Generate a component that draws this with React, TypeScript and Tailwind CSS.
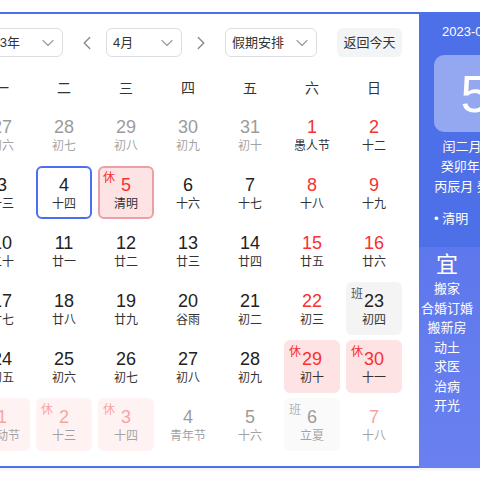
import { ChevronDown, ChevronLeft, ChevronRight } from 'lucide-react';

type Day = {
  d: number;
  l: string;
  out?: boolean;
  red?: boolean;
  tag?: '休' | '班';
  today?: boolean;
  active?: boolean;
};

const weekdays = ['一', '二', '三', '四', '五', '六', '日'];

const weeks: Day[][] = [
  [
    { d: 27, l: '初六', out: true },
    { d: 28, l: '初七', out: true },
    { d: 29, l: '初八', out: true },
    { d: 30, l: '初九', out: true },
    { d: 31, l: '初十', out: true },
    { d: 1, l: '愚人节', red: true },
    { d: 2, l: '十二', red: true },
  ],
  [
    { d: 3, l: '十三' },
    { d: 4, l: '十四', today: true },
    { d: 5, l: '清明', red: true, tag: '休', active: true },
    { d: 6, l: '十六' },
    { d: 7, l: '十七' },
    { d: 8, l: '十八', red: true },
    { d: 9, l: '十九', red: true },
  ],
  [
    { d: 10, l: '二十' },
    { d: 11, l: '廿一' },
    { d: 12, l: '廿二' },
    { d: 13, l: '廿三' },
    { d: 14, l: '廿四' },
    { d: 15, l: '廿五', red: true },
    { d: 16, l: '廿六', red: true },
  ],
  [
    { d: 17, l: '廿七' },
    { d: 18, l: '廿八' },
    { d: 19, l: '廿九' },
    { d: 20, l: '谷雨' },
    { d: 21, l: '初二' },
    { d: 22, l: '初三', red: true },
    { d: 23, l: '初四', tag: '班' },
  ],
  [
    { d: 24, l: '初五' },
    { d: 25, l: '初六' },
    { d: 26, l: '初七' },
    { d: 27, l: '初八' },
    { d: 28, l: '初九' },
    { d: 29, l: '初十', red: true, tag: '休' },
    { d: 30, l: '十一', red: true, tag: '休' },
  ],
  [
    { d: 1, l: '劳动节', out: true, red: true, tag: '休' },
    { d: 2, l: '十三', out: true, red: true, tag: '休' },
    { d: 3, l: '十四', out: true, red: true, tag: '休' },
    { d: 4, l: '青年节', out: true },
    { d: 5, l: '十六', out: true },
    { d: 6, l: '立夏', out: true, tag: '班' },
    { d: 7, l: '十八', out: true, red: true },
  ],
];

const good = ['搬家', '合婚订婚', '搬新房', '动土', '求医', '治病', '开光'];
const bad = ['安葬', '行丧', '伐木', '作梁'];

const Cell = ({ day }: { day: Day }) => {
  let box = 'border-transparent';
  if (day.today) box = 'border-[#4e6ef2] bg-white';
  else if (day.active) box = 'border-[#eca0a5] bg-[#fde3e4]';
  else if (day.tag === '休') box = 'border-transparent bg-[#fde3e4]';
  else if (day.tag === '班') box = 'border-transparent bg-[#f4f4f5]';

  return (
    <div
      className={`relative flex h-[53px] flex-col items-center rounded-[6px] border-2 pt-[6px] ${box} ${
        day.out ? 'opacity-[0.45]' : ''
      }`}
    >
      {day.tag && (
        <span
          className={`absolute left-[3px] top-[3px] text-[12px] leading-[14px] ${
            day.tag === '休' ? 'text-[#f73131]' : 'text-[#555]'
          }`}
        >
          {day.tag}
        </span>
      )}
      <span className={`text-[18px] leading-[22px] ${day.red ? 'text-[#f73131]' : 'text-[#222]'}`}>{day.d}</span>
      <span className="whitespace-nowrap text-[12px] leading-[16px] text-[#333]">{day.l}</span>
    </div>
  );
};

const Select = ({ label, className }: { label: string; className: string }) => (
  <div
    className={`flex h-full items-center justify-between rounded-[6px] border border-[#dcdee3] bg-white pr-[4px] ${className}`}
  >
    <span className="whitespace-nowrap">{label}</span>
    <ChevronDown size={20} strokeWidth={1.3} className="text-[#999]" />
  </div>
);

export default function App() {
  return (
    <div className="h-[480px] w-[480px] overflow-hidden bg-white font-['Liberation_Sans','Noto_Sans_CJK_SC',sans-serif]">
      <div className="ml-[-43px] mt-[12px] flex w-max shadow-[0_2px_3px_rgba(0,0,0,0.06)]">
        {/* month grid */}
        <div className="w-[462px] border-y-2 border-l-2 border-[#4e6ef2] bg-white pb-[15px] pl-[15px] pr-[17px] pt-[14px]">
          <div className="flex h-[29px] items-center text-[13px] text-[#333]">
            <Select label="2023年" className="ml-[-8px] w-[97px] pl-[11px]" />
            <ChevronLeft size={22} strokeWidth={1.4} className="ml-[13px] text-[#888]" />
            <Select label="4月" className="ml-[8px] w-[76px] pl-[6px]" />
            <ChevronRight size={22} strokeWidth={1.4} className="ml-[8px] text-[#888]" />
            <Select label="假期安排" className="ml-[13px] w-[92px] pl-[6px]" />
            <button className="ml-[20px] flex h-full w-[65px] items-center justify-center rounded-[6px] bg-[#f3f4f6] text-[13px] text-[#333]">
              返回今天
            </button>
          </div>

          <div className="mb-[8px] mt-[19px] grid h-[24px] grid-cols-[repeat(7,56px)] gap-x-[6px] text-[14px] leading-[24px] text-[#333]">
            {weekdays.map((w) => (
              <span key={w} className="text-center">
                {w}
              </span>
            ))}
          </div>

          <div className="grid grid-cols-[repeat(7,56px)] gap-x-[6px] gap-y-[5px]">
            {weeks.flat().map((day, i) => (
              <Cell key={i} day={day} />
            ))}
          </div>
        </div>

        {/* day detail panel */}
        <aside className="flex w-[112px] flex-col text-white">
          <div className="flex h-[235px] flex-col bg-[#4d6fe8] pt-[10px]">
            <p className="whitespace-nowrap pl-[23px] text-[13px] leading-[20px]">2023-04-05 星期三</p>
            <div className="mx-[15px] mt-[13px] flex h-[77px] items-center justify-center rounded-[10px] bg-white/40 text-[52px] leading-none">
              5
            </div>
            <div className="mt-[5px] flex flex-col items-center whitespace-nowrap text-[13px] leading-[20px]">
              <span>闰二月十五</span>
              <span>癸卯年 兔年</span>
              <span>丙辰月 癸巳日</span>
            </div>
            <p className="mt-[12px] whitespace-nowrap pl-[15px] text-[13px] leading-[20px]">• 清明</p>
          </div>
          <div className="flex flex-1 bg-gradient-to-b from-[#5d78ec] to-[#6a80f0] pt-[4px]">
            <div className="flex flex-1 flex-col items-center">
              <span className="text-[22px] leading-[28px]">宜</span>
              {good.map((g) => (
                <span key={g} className="whitespace-nowrap text-[13px] leading-[19.5px]">
                  {g}
                </span>
              ))}
            </div>
            <div className="flex flex-1 flex-col items-center">
              <span className="text-[22px] leading-[28px]">忌</span>
              {bad.map((g) => (
                <span key={g} className="whitespace-nowrap text-[13px] leading-[19.5px]">
                  {g}
                </span>
              ))}
            </div>
          </div>
        </aside>
      </div>
    </div>
  );
}
